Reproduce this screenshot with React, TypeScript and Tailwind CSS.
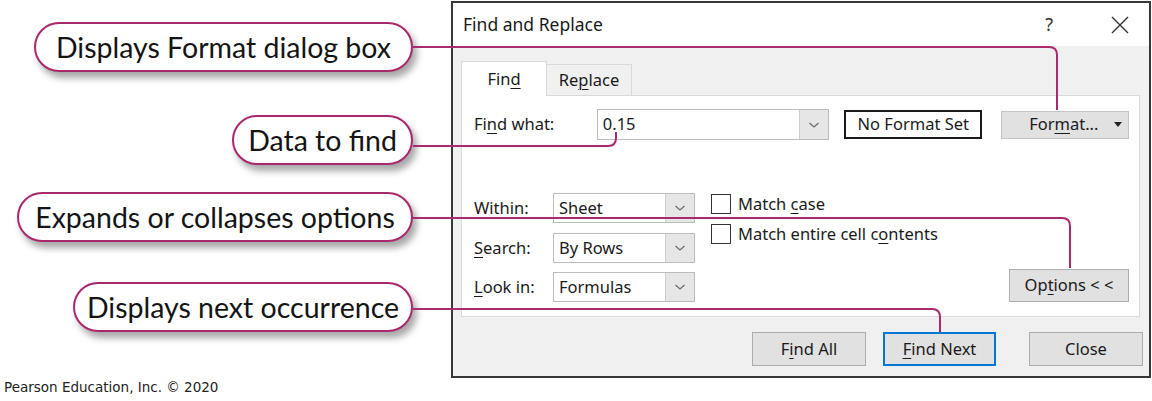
const dlgFont = { fontFamily: '"Noto Sans", "Open Sans", sans-serif' }

function U({ children }: { children: React.ReactNode }) {
  return <span className="underline decoration-1 underline-offset-[3px]">{children}</span>
}

function Callout({ text, width, className }: { text: string; width: string; className: string }) {
  return (
    <div
      className={`${width} ${className} h-[50px] rounded-full border-2 border-[#a9286c] bg-white shadow-[4px_6px_7px_rgba(0,0,0,0.35)] flex items-center justify-center text-[28.5px] text-[#141414] leading-none`}
      style={{ fontFamily: 'Lato, "Noto Sans", sans-serif' }}
    >
      {text}
    </div>
  )
}

function Chevron() {
  return (
    <svg width="12" height="8" viewBox="0 0 12 8" fill="none">
      <path d="M1.5 2 L6 6 L10.5 2" stroke="#6b6b6b" strokeWidth="1.2" />
    </svg>
  )
}

function Select({ value, width }: { value: string; width: string }) {
  return (
    <div className={`${width} h-[30px] flex border border-[#bcbcbc] bg-white`}>
      <div className="flex-1 flex items-center pl-[5px] text-[16.5px] text-[#1a1a1a]">{value}</div>
      <div className="w-[29px] flex items-center justify-center bg-[#e6e6e6] border-l border-[#cfcfcf]">
        <Chevron />
      </div>
    </div>
  )
}

function Btn({ children, width, primary }: { children: React.ReactNode; width: string; primary?: boolean }) {
  return (
    <div
      className={`${width} h-[34px] flex items-center justify-center bg-[#e1e1e1] text-[16.5px] text-[#1a1a1a] ${
        primary ? 'border-2 border-[#0078d7]' : 'border border-[#adadad]'
      }`}
    >
      {children}
    </div>
  )
}

export default function App() {
  return (
    <div className="relative w-[1152px] h-[401px] bg-white overflow-hidden flex">
      {/* callouts column */}
      <div className="w-[451px] flex flex-col items-end pr-[38px]">
        <Callout text="Displays Format dialog box" width="w-[379px]" className="mt-[22px]" />
        <Callout text="Data to find" width="w-[181px]" className="mt-[43px]" />
        <Callout text="Expands or collapses options" width="w-[396px]" className="mt-[27px]" />
        <Callout text="Displays next occurrence" width="w-[340px]" className="mt-[40px]" />
        <div
          className="self-start pl-[4px] mt-[47px] text-[13.5px] text-[#222] leading-4"
          style={{ fontFamily: '"DejaVu Sans", Verdana, sans-serif' }}
        >
          Pearson Education, Inc. © 2020
        </div>
      </div>

      {/* dialog */}
      <div
        className="w-[700px] h-[377px] mt-[1px] border-2 border-[#383838] flex flex-col text-[#1a1a1a]"
        style={dlgFont}
      >
        <div className="h-[43px] bg-white flex items-center pl-[10px] pr-[20px]">
          <span className="text-[17.5px]">Find and Replace</span>
          <span className="ml-auto text-[18px] text-[#333]">?</span>
          <svg className="ml-[58px]" width="18" height="18" viewBox="0 0 18 18">
            <path d="M1 1 L17 17 M17 1 L1 17" stroke="#333" strokeWidth="1.4" />
          </svg>
        </div>

        <div className="flex-1 bg-[#f0f0f0] flex flex-col pt-[14px] pl-[8px]">
          <div className="flex items-end h-[35px]">
            <div className="relative z-10 w-[86px] h-[35px] -mb-px bg-white border border-b-0 border-[#d9d9d9] flex items-center justify-center text-[16.5px]">
              Fin<U>d</U>
            </div>
            <div className="w-[85px] h-[31px] bg-[#f0f0f0] border border-l-0 border-b-0 border-[#d9d9d9] flex items-center justify-center text-[16.5px]">
              Re<U>p</U>lace
            </div>
          </div>

          <div className="w-[679px] h-[222px] bg-white border border-[#d9d9d9] flex flex-col pl-[12px] pt-[13px] pr-[10px]">
            <div className="flex items-center h-[31px]">
              <div className="w-[123px] text-[16.5px]">
                Fi<U>n</U>d what:
              </div>
              <div className="w-[233px] h-[31px] flex border border-[#bcbcbc] bg-white">
                <div className="flex-1 flex items-center pl-[5px] text-[16.5px]">0.15</div>
                <div className="w-[29px] flex items-center justify-center bg-[#e6e6e6] border-l border-[#cfcfcf]">
                  <Chevron />
                </div>
              </div>
              <div className="ml-[15px] w-[138px] h-[29px] border-2 border-[#1a1a1a] bg-white flex items-center justify-center text-[16.5px]">
                No Format Set
              </div>
              <div className="ml-[19px] w-[128px] h-[28px] bg-[#e1e1e1] border border-[#c4c4c4] flex items-center pl-[27px] text-[16.5px]">
                For<U>m</U>at...
                <svg className="ml-auto mr-[6px]" width="8" height="5" viewBox="0 0 8 5">
                  <path d="M0 0 H8 L4 5 Z" fill="#222" />
                </svg>
              </div>
            </div>

            <div className="flex mt-[53px]">
              <div className="flex flex-col">
                <div className="flex items-center h-[30px]">
                  <div className="w-[79px] text-[16.5px]">
                    Wit<U>h</U>in:
                  </div>
                  <Select value="Sheet" width="w-[142px]" />
                </div>
                <div className="flex items-center h-[30px] mt-[10px]">
                  <div className="w-[79px] text-[16.5px]">
                    <U>S</U>earch:
                  </div>
                  <Select value="By Rows" width="w-[142px]" />
                </div>
                <div className="flex items-center h-[30px] mt-[9px]">
                  <div className="w-[79px] text-[16.5px]">
                    <U>L</U>ook in:
                  </div>
                  <Select value="Formulas" width="w-[142px]" />
                </div>
              </div>

              <div className="flex flex-col ml-[16px]">
                <div className="flex items-center h-[20px] mt-[1px]">
                  <div className="w-[20px] h-[20px] border border-[#333] bg-white" />
                  <span className="ml-[7px] text-[16.5px]">
                    Match <U>c</U>ase
                  </span>
                </div>
                <div className="flex items-center h-[20px] mt-[10px]">
                  <div className="w-[20px] h-[20px] border border-[#333] bg-white" />
                  <span className="ml-[7px] text-[16.5px]">
                    Match entire cell c<U>o</U>ntents
                  </span>
                </div>
              </div>

              <div className="ml-auto self-end w-[120px] h-[33px] bg-[#e1e1e1] border border-[#adadad] flex items-center justify-center text-[16.5px]">
                Op<U>t</U>ions &lt; &lt;
              </div>
            </div>
          </div>

          <div className="flex justify-end pt-[15px] pr-[6px]">
            <Btn width="w-[114px]">
              F<U>i</U>nd All
            </Btn>
            <div className="ml-[17px]">
              <Btn width="w-[113px]" primary>
                <U>F</U>ind Next
              </Btn>
            </div>
            <div className="ml-[33px]">
              <Btn width="w-[114px]">Close</Btn>
            </div>
          </div>
        </div>
      </div>

      {/* leader lines */}
      <svg className="absolute inset-0 pointer-events-none" width="1152" height="401" viewBox="0 0 1152 401">
        <g stroke="#aa2a6e" strokeWidth="2" fill="none">
          <path d="M413 47 H1049 Q1057 47 1057 55 V110" />
          <path d="M413 146 H608 Q616 146 616 138 V132" />
          <path d="M413 218 H1062 Q1070 218 1070 226 V268" />
          <path d="M413 309 H932 Q940 309 940 317 V332" />
        </g>
      </svg>
    </div>
  )
}
